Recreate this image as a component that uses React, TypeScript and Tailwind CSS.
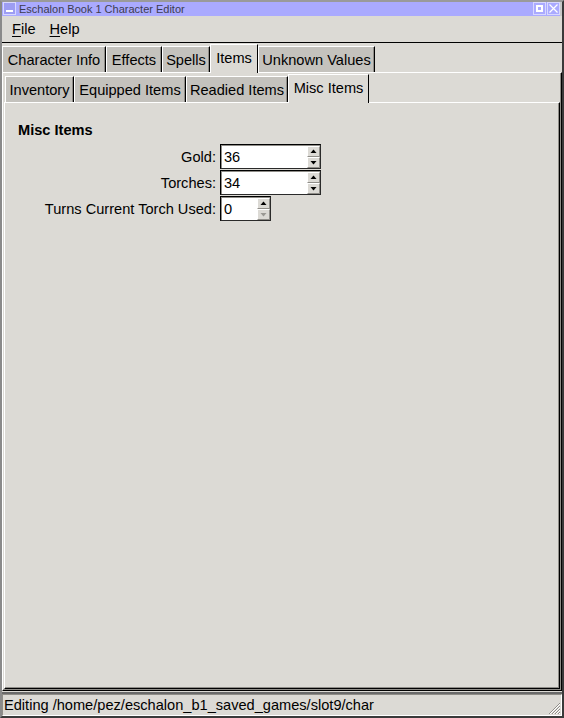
import React from 'react';

const row1 = [
  { label: 'Character Info', w: 'w-[104px]', sel: false },
  { label: 'Effects', w: 'w-[56px]', sel: false },
  { label: 'Spells', w: 'w-[48px]', sel: false },
  { label: 'Items', w: 'w-[48px]', sel: true },
  { label: 'Unknown Values', w: 'w-[117px]', sel: false },
];

const row2 = [
  { label: 'Inventory', w: 'w-[69px]', sel: false },
  { label: 'Equipped Items', w: 'w-[112px]', sel: false },
  { label: 'Readied Items', w: 'w-[102px]', sel: false },
  { label: 'Misc Items', w: 'w-[81px]', sel: true },
];

function Tab({ label, w, sel }: { label: string; w: string; sel: boolean }) {
  if (sel) {
    return (
      <div
        className={`${w} h-[29px] mb-[-1px] relative z-10 bg-[#dcdad5] border-l border-t border-white border-r border-r-black flex items-center justify-center pb-[3px] text-[14.6px] leading-[16px] text-black whitespace-nowrap`}
      >
        {label}
      </div>
    );
  }
  return (
    <div
      className={`${w} h-[26px] bg-[#c4c2bd] border-l border-t border-white border-r border-r-black shadow-[inset_-1px_0_0_#8f8d88] flex items-center justify-center text-[14.6px] leading-[16px] text-black whitespace-nowrap`}
    >
      {label}
    </div>
  );
}

function SpinArrow({ up, disabled }: { up: boolean; disabled?: boolean }) {
  const c = disabled ? '#9a9893' : '#000';
  return (
    <div className="flex-1 bg-[#dcdad5] border-t border-l border-white border-r border-b border-r-[#8f8d88] border-b-[#8f8d88] flex items-center justify-center">
      <svg width="7" height="5" viewBox="0 0 7 5">
        {up ? (
          <polygon points="3.5,0.5 6.5,4 0.5,4" fill={c} />
        ) : (
          <polygon points="0.5,1 6.5,1 3.5,4.5" fill={c} />
        )}
      </svg>
    </div>
  );
}

function SpinEntry({ value, w, downDisabled }: { value: string; w: string; downDisabled?: boolean }) {
  return (
    <div className={`${w} h-[25px] flex border border-t-[#000] border-l-[#000] border-r-[#2a2a2a] border-b-[#2a2a2a] shadow-[inset_1px_1px_0_#8f8d88] bg-white`}>
      <div className="flex-1 flex items-center pl-[3px] text-[14.6px] leading-[16px] text-black">{value}</div>
      <div className="w-[13px] flex flex-col mt-[1px]">
        <SpinArrow up />
        <SpinArrow up={false} disabled={downDisabled} />
      </div>
    </div>
  );
}

function FieldRow({ label, children }: { label: string; children: React.ReactNode }) {
  return (
    <div className="flex items-center">
      <div className="w-[198px] text-right text-[14.6px] leading-[16px] text-black whitespace-nowrap">{label}</div>
      <div className="ml-[4px]">{children}</div>
    </div>
  );
}

export default function App() {
  return (
    <div className="w-[564px] h-[718px] bg-[#dcdad5] flex flex-col overflow-hidden border-2 border-t-[#9a9a9a] border-l-[#8a8a8a] border-r-[#3a3a3a] border-b-[#3a3a3a] font-['Liberation_Sans',Arial,sans-serif] text-black">
      {/* Title bar */}
      <div className="h-[14px] flex items-stretch bg-[#aaaaff]">
        <div className="w-[13px] h-[13px] ml-[1px] border border-[#d8d8ff] bg-[#9d9df3] flex items-end justify-center pb-[2px]">
          <div className="w-[7px] h-[2px] bg-white" />
        </div>
        <div className="ml-[3px] text-[11px] leading-[14px] text-[#3c3c50] whitespace-nowrap">Eschalon Book 1 Character Editor</div>
        <div className="flex-1" />
        <div className="w-[13px] h-[13px] border border-[#d8d8ff] flex items-center justify-center">
          <div className="w-[7px] h-[7px] border-2 border-white" />
        </div>
        <div className="w-[13px] h-[13px] ml-[1px] border border-[#d8d8ff] flex items-center justify-center">
          <svg width="9" height="9" viewBox="0 0 9 9">
            <path d="M0.5 0.5 L8.5 8.5 M8.5 0.5 L0.5 8.5" stroke="white" strokeWidth="1.2" />
          </svg>
        </div>
        <div className="w-[2px] bg-[#c8c8c8]" />
      </div>

      {/* Menu bar */}
      <div className="h-[27px] flex items-center border-b border-black text-[14.6px] leading-[16px]">
        <div className="ml-[10px]">
          <span className="underline underline-offset-[2px]">F</span>ile
        </div>
        <div className="ml-[14px]">
          <span className="underline underline-offset-[2px]">H</span>elp
        </div>
      </div>

      {/* Outer notebook */}
      <div className="flex-1 flex flex-col pt-[1px]">
        <div className="h-[28px] flex items-end">
          {row1.map((t) => (
            <Tab key={t.label} {...t} />
          ))}
        </div>
        <div className="flex-1 flex flex-col border-t border-l border-white border-r border-b border-r-black border-b-black shadow-[inset_-1px_-1px_0_#8f8d88] pl-[1px] pr-[1px] pb-[1px] pt-[1px]">
          {/* Inner notebook */}
          <div className="h-[28px] flex items-end pl-[1px]">
            {row2.map((t) => (
              <Tab key={t.label} {...t} />
            ))}
          </div>
          <div className="flex-1 flex flex-col border-t border-l border-white border-r border-b border-r-black border-b-black shadow-[inset_-1px_-1px_0_#8f8d88] pl-[13px] pt-[19px]">
            <div className="font-bold text-[14.6px] leading-[16px]">Misc Items</div>
            <div className="mt-[6px] flex flex-col gap-[1px]">
              <FieldRow label="Gold:">
                <SpinEntry value="36" w="w-[101px]" />
              </FieldRow>
              <FieldRow label="Torches:">
                <SpinEntry value="34" w="w-[101px]" />
              </FieldRow>
              <FieldRow label="Turns Current Torch Used:">
                <SpinEntry value="0" w="w-[51px]" downDisabled />
              </FieldRow>
            </div>
          </div>
        </div>
      </div>

      {/* Status bar */}
      <div className="h-[24px] mt-[1px] flex items-stretch border-t-2 border-t-[#6a6a6a]">
        <div className="flex-1 flex items-center pl-[1px] border-t border-l border-[#8f8d88] border-r border-b border-r-white border-b-white text-[14.6px] leading-[16px] relative whitespace-nowrap">
          Editing /home/pez/eschalon_b1_saved_games/slot9/char
          <svg className="absolute right-0 bottom-0" width="14" height="14" viewBox="0 0 14 14">
            <path d="M13 2 L2 13 M13 5 L5 13 M13 8 L8 13 M13 11 L11 13" stroke="#8f8d88" strokeWidth="1" />
            <path d="M13 3 L3 13 M13 6 L6 13 M13 9 L9 13 M13 12 L12 13" stroke="#ffffff" strokeWidth="1" />
          </svg>
        </div>
      </div>
    </div>
  );
}
